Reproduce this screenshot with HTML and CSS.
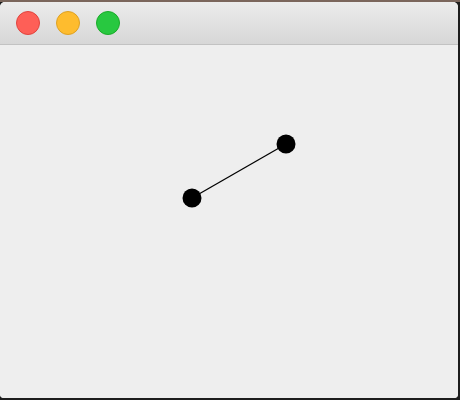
FILE: index.html
```html
<!DOCTYPE html>
<html>
<head>
<meta charset="utf-8">
<link rel="stylesheet" href="styles.css">
</head>
<body>
<div class="desktop">
  <div class="window">
    <div class="titlebar">
      <span class="light red"></span>
      <span class="light yellow"></span>
      <span class="light green"></span>
    </div>
    <div class="content">
      <svg class="canvas" width="458" height="351" viewBox="0 0 458 351">
        <line x1="192" y1="153" x2="286" y2="99" stroke="#000" stroke-width="1.3"/>
        <circle cx="192" cy="153" r="9.5" fill="#000"/>
        <circle cx="286" cy="99" r="9.5" fill="#000"/>
      </svg>
    </div>
  </div>
</div>
</body>
</html>
```
FILE: styles.css
```css
html, body {
  margin: 0;
  padding: 0;
  width: 460px;
  height: 400px;
  overflow: hidden;
}
.desktop {
  width: 460px;
  height: 400px;
  background: linear-gradient(#7b665c 0, #7b665c 2px, #1d1d1d 2px);
  padding-top: 2px;
  box-sizing: border-box;
}
.window {
  width: 458px;
  height: 396px;
  border-radius: 5px 5px 4px 4px;
  overflow: hidden;
  background: #eeeeee;
  display: flex;
  flex-direction: column;
}
.titlebar {
  height: 42px;
  flex: none;
  background: linear-gradient(#ececec, #d7d7d7);
  border-bottom: 1px solid #c2c2c2;
  display: flex;
  align-items: center;
  padding-left: 16px;
  gap: 16px;
  box-sizing: content-box;
}
.light {
  width: 24px;
  height: 24px;
  border-radius: 50%;
  box-sizing: border-box;
}
.red { background: #fe5f57; border: 1px solid #e0443e; }
.yellow { background: #febc2e; border: 1px solid #dea123; }
.green { background: #28c840; border: 1px solid #1aab29; }
.content {
  flex: 1;
  position: relative;
  background: #eeeeee;
}
.canvas {
  display: block;
}
```
